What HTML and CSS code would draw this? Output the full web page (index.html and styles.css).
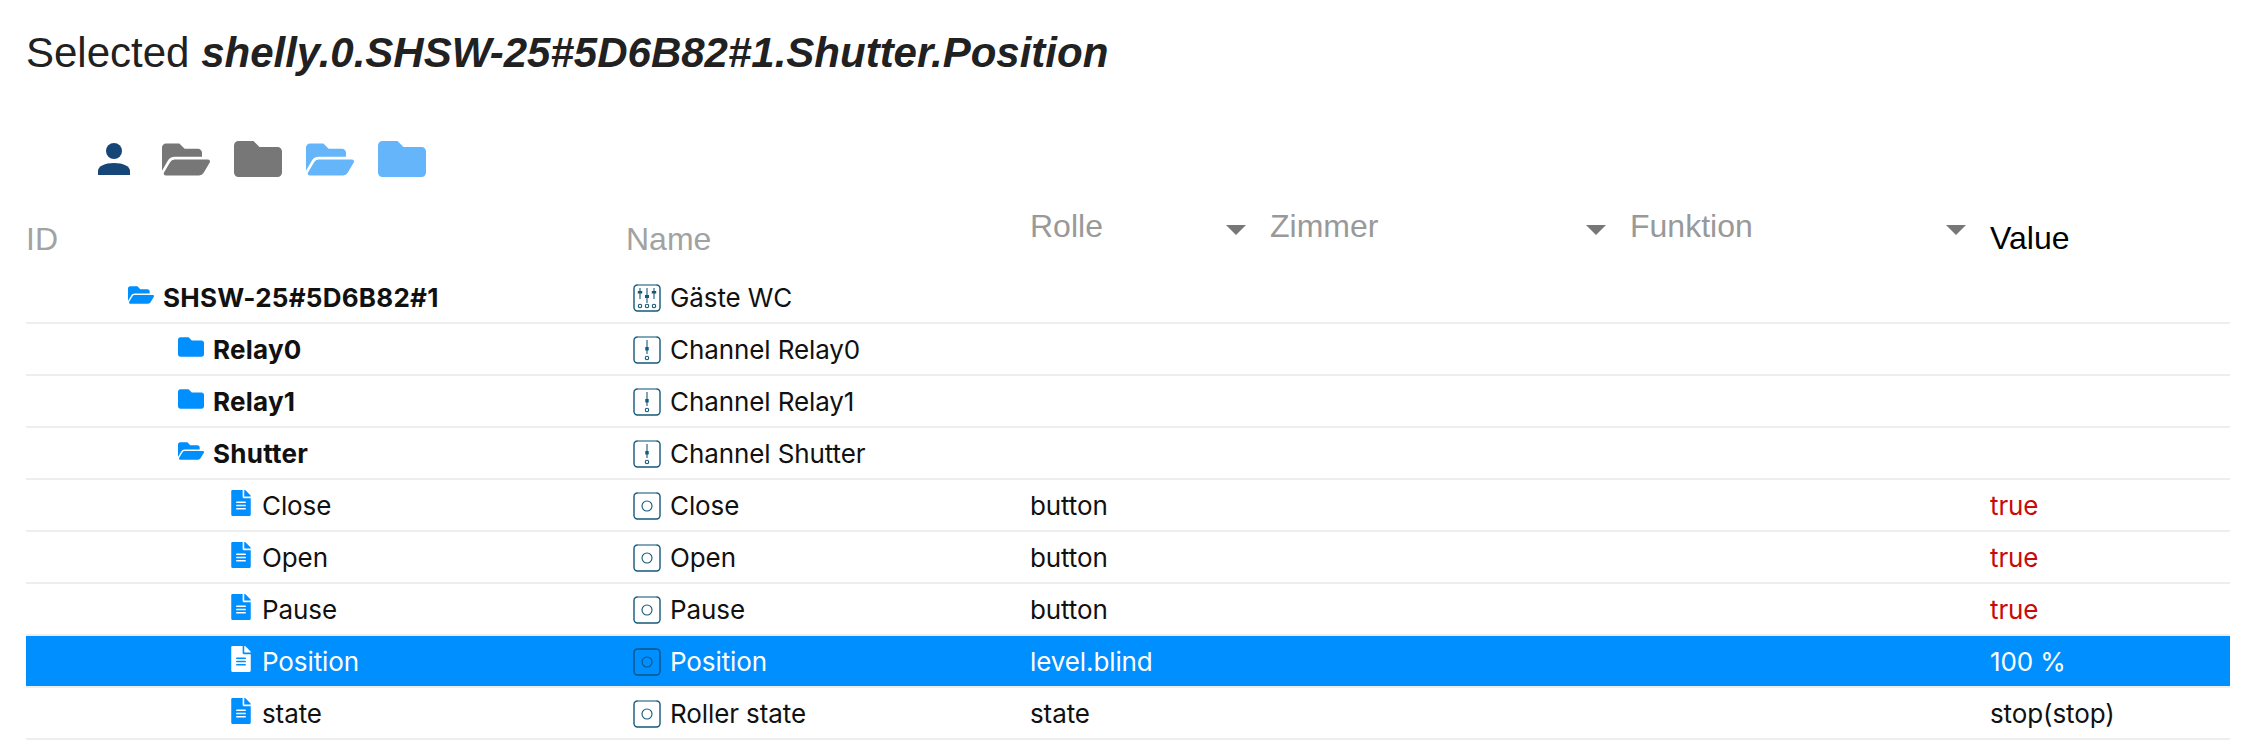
FILE: index.html
```html
<!DOCTYPE html>
<html lang="de">
<head>
<meta charset="utf-8">
<title>Selected</title>
<link rel="stylesheet" href="styles.css">
</head>
<body>
<svg class="defs" width="0" height="0" aria-hidden="true">
  <defs>
    <symbol id="i-folder" viewBox="0 0 512 512"><path d="M464 128H272l-64-64H48C21.49 64 0 85.49 0 112v288c0 26.51 21.49 48 48 48h416c26.51 0 48-21.49 48-48V176c0-26.51-21.49-48-48-48z"/></symbol>
    <symbol id="i-open" viewBox="0 0 576 512"><path d="M572.694 292.093L500.27 416.248A63.997 63.997 0 0 1 444.989 448H45.025c-18.523 0-30.064-20.093-20.731-36.093l72.424-124.155A64 64 0 0 1 152 256h399.964c18.523 0 30.064 20.093 20.73 36.093zM152 224h328v-48c0-26.51-21.49-48-48-48H272l-64-64H48C21.49 64 0 85.49 0 112v278.046l69.077-118.418C86.214 242.25 117.989 224 152 224z"/></symbol>
    <symbol id="i-file" viewBox="0 0 384 512"><path d="M224 136V0H24C10.7 0 0 10.7 0 24v464c0 13.3 10.7 24 24 24h336c13.3 0 24-10.7 24-24V160H248c-13.2 0-24-10.8-24-24zm64 236c0 6.6-5.4 12-12 12H108c-6.6 0-12-5.4-12-12v-8c0-6.6 5.4-12 12-12h168c6.6 0 12 5.4 12 12v8zm0-64c0 6.6-5.4 12-12 12H108c-6.6 0-12-5.4-12-12v-8c0-6.6 5.4-12 12-12h168c6.6 0 12 5.4 12 12v8zm0-72v8c0 6.6-5.4 12-12 12H108c-6.6 0-12-5.4-12-12v-8c0-6.6 5.4-12 12-12h168c6.6 0 12 5.4 12 12zm96-114.1v6.1H256V0h6.1c6.4 0 12.5 2.5 17 7l97.9 98c4.5 4.5 7 10.6 7 16.9z"/></symbol>
    <symbol id="i-room" viewBox="0 0 28 28"><rect x="1" y="1" width="26" height="26" rx="3.5" fill="none" stroke-width="1.4"/><path d="M4.5 1h19" fill="none" stroke-width="1.5" style="stroke:var(--hl)"/><path d="M7 4v11M14 4v15M21 4v11" fill="none" stroke-width="1.1"/><path d="M4.8 7h4.4v2.600H4.800zM12 11h4v3h-4zM18.800 7h4.400v2.600h-4.400z" stroke="none"/><circle cx="7" cy="22" r="1.7" fill="none" stroke-width="1.1"/><circle cx="14" cy="22" r="1.7" fill="none" stroke-width="1.1"/><circle cx="21" cy="22" r="1.7" fill="none" stroke-width="1.1"/></symbol>
    <symbol id="i-channel" viewBox="0 0 28 28"><rect x="1" y="1" width="26" height="26" rx="3.5" fill="none" stroke-width="1.4"/><path d="M4.5 1h19" fill="none" stroke-width="1.5" style="stroke:var(--hl)"/><path d="M14 4v14" fill="none" stroke-width="1.1"/><path d="M12.300 11h3.400v3.500h-3.400z" stroke="none"/><circle cx="14" cy="22" r="1.7" fill="none" stroke-width="1.1"/></symbol>
    <symbol id="i-state" viewBox="0 0 28 28"><rect x="1" y="1" width="26" height="26" rx="3.5" fill="none" stroke-width="1.4"/><path d="M4.5 1h19" fill="none" stroke-width="1.5" style="stroke:var(--hl)"/><circle cx="14" cy="14" r="5" fill="none" stroke-width="1.1"/></symbol>
  </defs>
</svg>
<main class="page">
  <h1 class="title">Selected <b class="title-id">shelly.0.SHSW-25#5D6B82#1.Shutter.Position</b></h1>

  <div class="toolbar">
    <svg class="tool tool-person" viewBox="0 0 32 32"><ellipse cx="16" cy="8" rx="8" ry="8"/><path d="M0 32v-4C0 23 7 20 16 20s16 3 16 8v4z"/></svg>
    <svg class="tool tool-gray"><use href="#i-open"/></svg>
    <svg class="tool tool-closed tool-gray"><use href="#i-folder"/></svg>
    <svg class="tool tool-blue"><use href="#i-open"/></svg>
    <svg class="tool tool-closed tool-blue"><use href="#i-folder"/></svg>
  </div>

  <div class="grid head">
    <div class="hcell hcell-low">ID</div>
    <div class="hcell hcell-low">Name</div>
    <div class="hcell hcell-filter">Rolle<i class="arrow"></i></div>
    <div class="hcell hcell-filter">Zimmer<i class="arrow"></i></div>
    <div class="hcell hcell-filter">Funktion<i class="arrow"></i></div>
    <div class="hcell hcell-value">Value</div>
  </div>

  <div class="grid row">
    <div class="cell id lvl0"><svg class="ic ic-folder"><use href="#i-open"/></svg><b>SHSW-25#5D6B82#1</b></div>
    <div class="cell name"><svg class="obj"><use href="#i-room"/></svg>Gäste WC</div>
    <div class="cell"></div><div class="cell"></div><div class="cell"></div><div class="cell"></div>
  </div>
  <div class="grid row">
    <div class="cell id lvl1"><svg class="ic ic-folder"><use href="#i-folder"/></svg><b>Relay0</b></div>
    <div class="cell name"><svg class="obj"><use href="#i-channel"/></svg>Channel Relay0</div>
    <div class="cell"></div><div class="cell"></div><div class="cell"></div><div class="cell"></div>
  </div>
  <div class="grid row">
    <div class="cell id lvl1"><svg class="ic ic-folder"><use href="#i-folder"/></svg><b>Relay1</b></div>
    <div class="cell name"><svg class="obj"><use href="#i-channel"/></svg>Channel Relay1</div>
    <div class="cell"></div><div class="cell"></div><div class="cell"></div><div class="cell"></div>
  </div>
  <div class="grid row">
    <div class="cell id lvl1"><svg class="ic ic-folder"><use href="#i-open"/></svg><b>Shutter</b></div>
    <div class="cell name"><svg class="obj"><use href="#i-channel"/></svg>Channel Shutter</div>
    <div class="cell"></div><div class="cell"></div><div class="cell"></div><div class="cell"></div>
  </div>
  <div class="grid row">
    <div class="cell id lvl2"><svg class="ic ic-file"><use href="#i-file"/></svg>Close</div>
    <div class="cell name"><svg class="obj"><use href="#i-state"/></svg>Close</div>
    <div class="cell">button</div><div class="cell"></div><div class="cell"></div><div class="cell val-true">true</div>
  </div>
  <div class="grid row">
    <div class="cell id lvl2"><svg class="ic ic-file"><use href="#i-file"/></svg>Open</div>
    <div class="cell name"><svg class="obj"><use href="#i-state"/></svg>Open</div>
    <div class="cell">button</div><div class="cell"></div><div class="cell"></div><div class="cell val-true">true</div>
  </div>
  <div class="grid row">
    <div class="cell id lvl2"><svg class="ic ic-file"><use href="#i-file"/></svg>Pause</div>
    <div class="cell name"><svg class="obj"><use href="#i-state"/></svg>Pause</div>
    <div class="cell">button</div><div class="cell"></div><div class="cell"></div><div class="cell val-true">true</div>
  </div>
  <div class="grid row selected">
    <div class="cell id lvl2"><svg class="ic ic-file"><use href="#i-file"/></svg>Position</div>
    <div class="cell name"><svg class="obj"><use href="#i-state"/></svg>Position</div>
    <div class="cell">level.blind</div><div class="cell"></div><div class="cell"></div><div class="cell">100 %</div>
  </div>
  <div class="grid row">
    <div class="cell id lvl2"><svg class="ic ic-file"><use href="#i-file"/></svg>state</div>
    <div class="cell name"><svg class="obj"><use href="#i-state"/></svg>Roller state</div>
    <div class="cell">state</div><div class="cell"></div><div class="cell"></div><div class="cell">stop(stop)</div>
  </div>
</main>
</body>
</html>
```
FILE: styles.css
```css
html, body { margin: 0; padding: 0; background: #fff; }
body { font-family: Inter, "Liberation Sans", sans-serif; color: #111; overflow: hidden; }
.defs { display: block; height: 0; }
.page { padding: 28px 12px 0 26px; }

.title { margin: 0; font: 400 42px/50px "Liberation Sans", Arial, sans-serif; color: #212121; }
.title-id { font-style: italic; font-weight: 700; }

.toolbar { display: flex; align-items: center; gap: 24px; height: 36px; margin: 63px 0 0 72px; }
.tool { display: block; width: 48px; height: 43px; flex: none; overflow: visible; }
.tool-closed { height: 48px; }
.tool-person { width: 32px; height: 32px; margin-right: 8px; fill: #164677; }
.tool-gray { fill: #777; }
.tool-blue { fill: #64b5f9; }

.grid { display: grid; grid-template-columns: 600px 404px 240px 360px 360px 240px; }
.head { height: 95px; font: 400 32px/36px "Liberation Sans", Arial, sans-serif; color: #a2a2a2; }
.hcell { position: relative; }
.hcell-low { padding-top: 44px; }
.hcell-filter { padding-top: 31px; color: #999; }
.hcell-value { padding-top: 43px; color: #000; }
.arrow { position: absolute; top: 48px; right: 24px; width: 0; height: 0; border-left: 10px solid transparent; border-right: 10px solid transparent; border-top: 10px solid #777; }

.row { height: 50px; border-bottom: 2px solid #eee; font-size: 26px; letter-spacing: -0.1px; line-height: 50px; }
.cell { display: flex; align-items: center; white-space: nowrap; min-width: 0; padding-top: 1px; box-sizing: border-box; }
.cell b { font-weight: 700; letter-spacing: 0.25px; }
.lvl0 { padding-left: 102px; }
.lvl1 { padding-left: 152px; }
.lvl2 { padding-left: 205px; }
.ic { flex: none; fill: #008fff; margin-top: -7px; }
.ic-folder { width: 26px; height: 26px; margin-right: 9px; }
.ic-file { width: 20px; height: 26px; margin-right: 11px; }
.name { padding-left: 7px; }
.obj { --hl: rgba(255, 255, 255, 0.4); flex: none; width: 28px; height: 28px; margin: -1px 9px 0 0; stroke: #14597a; fill: #14597a; }
.val-true { color: #c80a0a; }

.selected { background: #008fff; color: #fff; }
.selected .ic { fill: #fff; }
.selected .obj { --hl: transparent; stroke: #0b5484; fill: #0b5484; }
```
